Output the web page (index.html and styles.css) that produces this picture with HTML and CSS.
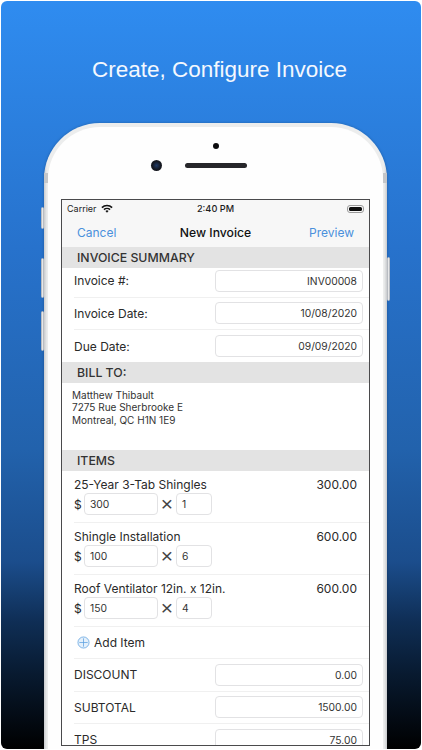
FILE: index.html
```html
<!DOCTYPE html>
<html lang="en">
<head>
<meta charset="utf-8">
<title>Create, Configure Invoice</title>
<link rel="stylesheet" href="styles.css">
</head>
<body>
<main class="poster">
  <h1 class="headline">Create, Configure Invoice</h1>
  <div class="phone">
    <span class="hw hw-mute"></span>
    <span class="hw hw-up"></span>
    <span class="hw hw-down"></span>
    <span class="hw hw-power"></span>
    <span class="band band-left"></span>
    <span class="band band-right"></span>
    <div class="phone-face">
      <div class="phone-top">
        <span class="sensor"></span>
        <span class="earpiece"><span class="camera"></span></span>
      </div>
      <div class="screen">
        <div class="status">
          <div class="status-left">
            <span>Carrier</span>
            <svg class="wifi" viewBox="0 0 14 10" aria-hidden="true">
              <path d="M0.4 3.3 A9.4 9.4 0 0 1 13.6 3.3 L12.3 4.7 A7.5 7.5 0 0 0 1.7 4.7 Z"/>
              <path d="M2.8 5.7 A6 6 0 0 1 11.2 5.7 L9.9 7 A4.1 4.1 0 0 0 4.1 7 Z"/>
              <path d="M5.2 8 A2.6 2.6 0 0 1 8.8 8 L7 9.9 Z"/>
            </svg>
          </div>
          <span class="clock">2:40 PM</span>
          <span class="battery"><span class="battery-fill"></span></span>
        </div>
        <nav class="navbar">
          <span class="nav-link">Cancel</span>
          <span class="nav-title">New Invoice</span>
          <span class="nav-link nav-link-end">Preview</span>
        </nav>
        <div class="section-head">INVOICE SUMMARY</div>
        <div class="row row-first"><span class="label">Invoice #:</span><span class="field">INV00008</span></div>
        <div class="row"><span class="label">Invoice Date:</span><span class="field">10/08/2020</span></div>
        <div class="row row-last"><span class="label">Due Date:</span><span class="field">09/09/2020</span></div>
        <div class="section-head">BILL TO:</div>
        <div class="address">Matthew Thibault<br>7275 Rue Sherbrooke E<br>Montreal, QC H1N 1E9</div>
        <div class="section-head">ITEMS</div>
        <div class="item">
          <div class="item-top"><span>25-Year 3-Tab Shingles</span><span class="item-total">300.00</span></div>
          <div class="item-inputs"><span class="dollar">$</span><span class="box box-price">300</span><span class="times">×</span><span class="box box-qty">1</span></div>
        </div>
        <div class="item">
          <div class="item-top"><span>Shingle Installation</span><span class="item-total">600.00</span></div>
          <div class="item-inputs"><span class="dollar">$</span><span class="box box-price">100</span><span class="times">×</span><span class="box box-qty">6</span></div>
        </div>
        <div class="item">
          <div class="item-top"><span>Roof Ventilator 12in. x 12in.</span><span class="item-total">600.00</span></div>
          <div class="item-inputs"><span class="dollar">$</span><span class="box box-price">150</span><span class="times">×</span><span class="box box-qty">4</span></div>
        </div>
        <div class="add-item">
          <svg class="plus" viewBox="0 0 14 14" aria-hidden="true">
            <circle cx="7" cy="7" r="6"/>
            <path d="M7 2.5V11.5M2.5 7H11.5"/>
          </svg>
          <span>Add Item</span>
        </div>
        <div class="row"><span class="label">DISCOUNT</span><span class="field">0.00</span></div>
        <div class="row"><span class="label">SUBTOTAL</span><span class="field">1500.00</span></div>
        <div class="row"><span class="label">TPS</span><span class="field">75.00</span></div>
      </div>
    </div>
  </div>
</main>
</body>
</html>
```
FILE: styles.css
```css
* { box-sizing: border-box; }

html, body {
  margin: 0;
  height: 750px;
  overflow: hidden;
  background: #fff;
}

.poster {
  margin: 1px;
  height: 748px;
  border-radius: 6px;
  overflow: hidden;
  display: flex;
  flex-direction: column;
  align-items: center;
  background: linear-gradient(180deg, #2f8cf0 0%, #2772cc 33%, #2262ac 60%, #1b4d8c 75%, #0f2e55 83%, #081a30 90%, #000 100%);
  font-family: Inter, "Noto Sans", sans-serif;
}

.headline {
  margin: 55px 0 0 17px;
  height: 28px;
  font: 400 22.5px/28px "Liberation Sans", Arial, sans-serif;
  color: #f4f8fe;
  white-space: nowrap;
}

.phone {
  position: relative;
  margin: 39px 0 0 9px;
  width: 343px;
  height: 640px;
  flex: none;
  border-radius: 56px 56px 0 0;
  padding: 4px 4px 0;
  background: linear-gradient(90deg, #c9cbce 0, #eceded 3px, #eceded calc(100% - 3px), #c9cbce 100%);
  box-shadow: 0 0 3px rgba(0, 0, 0, 0.25);
}

.phone-face {
  height: 100%;
  border-radius: 52px 52px 0 0;
  background: #fefefe;
}

.hw {
  position: absolute;
  width: 3px;
  background: #e6e7e9;
  border: 1px solid #b8bcc2;
  border-radius: 2px;
}
.hw-mute { left: -3px; top: 84px; height: 22px; }
.hw-up { left: -3px; top: 135px; height: 40px; }
.hw-down { left: -3px; top: 188px; height: 40px; }
.hw-power { right: -3px; top: 134px; height: 44px; }

.band {
  position: absolute;
  top: 50px;
  width: 4px;
  height: 10px;
  background: #c4c6c9;
}
.band-left { left: 0; }
.band-right { right: 0; }

.phone-top {
  height: 72px;
  padding-top: 16px;
  display: flex;
  flex-direction: column;
  align-items: center;
}

.sensor {
  width: 6px;
  height: 6px;
  border-radius: 50%;
  background: #0c0c0e;
}

.earpiece {
  position: relative;
  margin-top: 14px;
  width: 62px;
  height: 5px;
  border-radius: 3px;
  background: #26262a;
}

.camera {
  position: absolute;
  left: -34px;
  top: -3px;
  width: 11px;
  height: 11px;
  border-radius: 50%;
  background: radial-gradient(circle, #1f3a66 0, #14171f 55%, #2b2d33 100%);
}

.screen {
  margin: 0 13px;
  height: 547px;
  overflow: hidden;
  border: 1px solid #4a4a4c;
  background: #fff;
  color: #262626;
}

.status {
  height: 17px;
  padding: 0 5px;
  display: grid;
  grid-template-columns: 1fr auto 1fr;
  align-items: center;
  font-size: 9px;
  background: #f7f7f7;
  color: #1d1d1d;
}

.status-left {
  display: flex;
  align-items: center;
  gap: 4px;
}

.wifi { width: 12px; height: 9px; fill: #111; }

.clock { font-weight: 500; font-size: 9.2px; }

.battery {
  justify-self: end;
  width: 17px;
  height: 8px;
  padding: 1px;
  border: 1px solid #9a9a9a;
  border-radius: 3px;
  display: flex;
}

.battery-fill {
  flex: 1;
  background: #0d0d0d;
  border-radius: 1.5px;
}

.navbar {
  height: 30px;
  padding: 0 15px;
  display: grid;
  grid-template-columns: 1fr auto 1fr;
  align-items: center;
  background: #f7f7f7;
  font-size: 12px;
}

.nav-link { color: #4a90dc; }
.nav-link-end { justify-self: end; }
.nav-title { font-size: 12.2px; font-weight: 500; color: #111; }

.section-head {
  height: 21px;
  padding-left: 15px;
  display: flex;
  align-items: center;
  background: #e3e3e3;
  font-size: 12.3px;
  font-weight: 500;
  color: #333;
}

.row {
  height: 32.5px;
  margin-left: 12px;
  padding: 5px 6px 5px 0;
  display: flex;
  justify-content: space-between;
  align-items: center;
  border-bottom: 1px solid #f0f0f0;
  font-size: 12px;
}
.row-first { height: 29.5px; padding-top: 2px; }
.row-last { height: 32px; border-bottom: 0; }

.label { color: #2a2a2a; }

.field {
  width: 148px;
  height: 22px;
  padding: 0 5px;
  display: flex;
  justify-content: flex-end;
  align-items: center;
  flex: none;
  border: 1px solid #e2e2e4;
  border-radius: 4px;
  font-size: 10.3px;
  color: #333;
}

.address {
  height: 67px;
  padding: 5.5px 0 0 10px;
  font-size: 10px;
  line-height: 12.5px;
  color: #333;
}

.item {
  height: 52px;
  margin-left: 12px;
  padding: 4.5px 12px 0 0;
  border-bottom: 1px solid #f0f0f0;
}

.item-top {
  height: 17px;
  display: flex;
  justify-content: space-between;
  align-items: center;
  font-size: 12px;
  color: #2a2a2a;
}

.item-inputs {
  margin-top: 0.5px;
  height: 22px;
  display: flex;
  align-items: center;
}

.dollar { width: 10px; font-size: 12px; }

.box {
  height: 22px;
  padding-left: 5px;
  display: flex;
  align-items: center;
  border: 1px solid #e2e2e4;
  border-radius: 4px;
  font-size: 10.3px;
  color: #333;
}

.box-price { width: 74px; }
.box-qty { width: 36px; }

.times {
  width: 18px;
  text-align: center;
  font: 400 21px/20px "Liberation Sans", Arial, sans-serif;
  color: #444;
}

.add-item {
  height: 32px;
  margin-left: 12px;
  padding-left: 3px;
  display: flex;
  align-items: center;
  gap: 4px;
  border-bottom: 1px solid #f0f0f0;
  font-size: 12px;
  color: #2a2a2a;
}

.plus {
  width: 13px;
  height: 13px;
  fill: #e4f0fb;
  stroke: #5a9fe0;
  stroke-width: 0.8;
}
```
